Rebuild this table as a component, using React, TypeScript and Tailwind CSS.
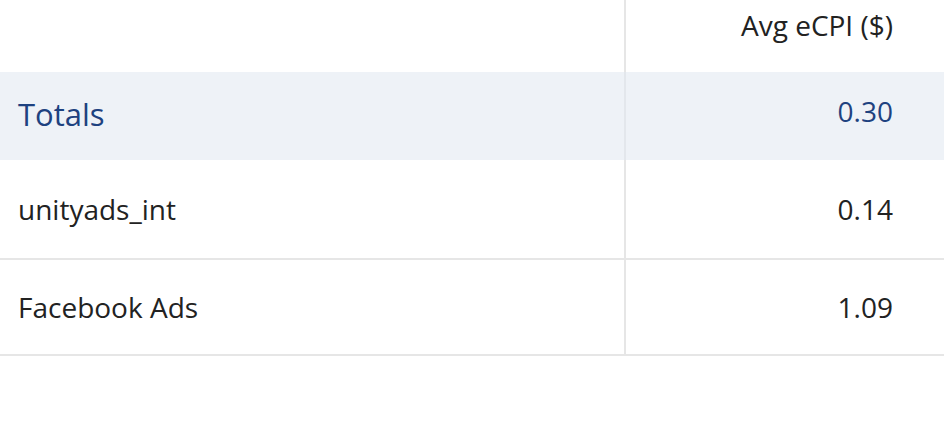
const rows = [
  { name: "unityads_int", value: "0.14" },
  { name: "Facebook Ads", value: "1.09" },
];

export default function App() {
  return (
    <div className="h-[436px] w-[944px] bg-white font-['Open_Sans',sans-serif] text-[#222]">
      {/* header */}
      <div className="flex h-[72px]">
        <div className="w-[626px] border-r-2 border-[#e6e6e6]" />
        <div className="flex flex-1 items-center justify-end pb-[22px] pr-[51px] text-[28px]">Avg eCPI ($)</div>
      </div>

      {/* totals */}
      <div className="flex h-[88px] bg-[#eef2f7] text-[#1e4280]">
        <div className="flex w-[626px] items-center border-r-2 border-[#e3e7ec] pb-[4px] pl-[18px] text-[31px]">Totals</div>
        <div className="flex flex-1 items-center justify-end pb-[10px] pr-[51px] text-[28px]">0.30</div>
      </div>

      {rows.map((r, i) => (
        <div key={r.name} className={`flex border-b-2 border-[#e6e6e6] ${i === 0 ? "h-[100px]" : "h-[96px]"}`}>
          <div className="flex w-[626px] items-center border-r-2 border-[#e6e6e6] pl-[18px] text-[28px]">{r.name}</div>
          <div className="flex flex-1 items-center justify-end pr-[51px] text-[28px]">{r.value}</div>
        </div>
      ))}
    </div>
  );
}
